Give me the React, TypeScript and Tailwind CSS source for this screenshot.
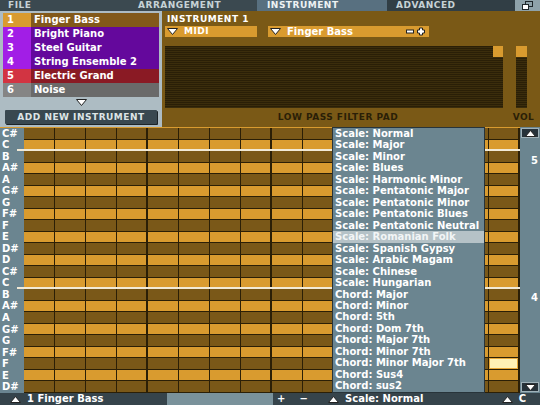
const notes = ["C#", "C", "B", "A#", "A", "G#", "G", "F#", "F", "E", "D#", "D", "C#", "C", "B", "A#", "A", "G#", "G", "F#", "F", "E", "D#"];

const scales = [
  "Scale: Normal",
  "Scale: Major",
  "Scale: Minor",
  "Scale: Blues",
  "Scale: Harmonic Minor",
  "Scale: Pentatonic Major",
  "Scale: Pentatonic Minor",
  "Scale: Pentatonic Blues",
  "Scale: Pentatonic Neutral",
  "Scale: Romanian Folk",
  "Scale: Spanish Gypsy",
  "Scale: Arabic Magam",
  "Scale: Chinese",
  "Scale: Hungarian",
  "Chord: Major",
  "Chord: Minor",
  "Chord: 5th",
  "Chord: Dom 7th",
  "Chord: Major 7th",
  "Chord: Minor 7th",
  "Chord: Minor Major 7th",
  "Chord: Sus4",
  "Chord: sus2",
];

const instruments = [
  { n: 1, name: "Finger Bass", num: "bg-[#d99b2f]", body: "bg-[#82591a]" },
  { n: 2, name: "Bright Piano", num: "bg-[#a21ee6]", body: "bg-[#64089c]" },
  { n: 3, name: "Steel Guitar", num: "bg-[#a21ee6]", body: "bg-[#64089c]" },
  { n: 4, name: "String Ensemble 2", num: "bg-[#a21ee6]", body: "bg-[#64089c]" },
  { n: 5, name: "Electric Grand", num: "bg-[#d23442]", body: "bg-[#8a1a24]" },
  { n: 6, name: "Noise", num: "bg-[#858585]", body: "bg-[#6a6a6a]" },
];

function Tri({ up = false, className = "" }: { up?: boolean; className?: string }) {
  return (
    <svg width="11" height="7" viewBox="0 0 11 7" className={className}>
      {up ? (
        <polygon points="0.5,6.5 5.5,0.5 10.5,6.5" fill="#fff" stroke="#222" strokeWidth="1" />
      ) : (
        <polygon points="0.5,0.5 10.5,0.5 5.5,6.5" fill="#fff" stroke="#222" strokeWidth="1" />
      )}
    </svg>
  );
}

function TopBar() {
  return (
    <div className="flex h-[11px] text-[9px] font-bold uppercase leading-none tracking-[0.5px] text-[#c6d2d6]">
      <div className="flex w-[128px] items-center bg-[#3b4950] pl-[8px]">File</div>
      <div className="flex w-[129px] items-center bg-[#3b4950] pl-[10px]">Arrangement</div>
      <div className="flex w-[130px] items-center bg-[#587080] pl-[10px] text-[#eef2f3]">Instrument</div>
      <div className="flex w-[128px] items-center bg-[#313e45] pl-[9px]">Advanced</div>
      <div className="flex flex-1 items-center justify-center bg-[#8ea2aa]">
        <svg width="11" height="9" viewBox="0 0 11 9">
          <rect x="3.5" y="0.5" width="7" height="5" fill="none" stroke="#1e262a" />
          <rect x="0.5" y="3.5" width="6" height="5" fill="#fff" stroke="#1e262a" />
        </svg>
      </div>
    </div>
  );
}

function InstrumentList() {
  return (
    <div className="flex w-[162px] flex-col bg-[#adbcc3] px-[3px] pt-[2px]">
      {instruments.map((it) => (
        <div key={it.n} className="flex h-[14px] text-[10px] font-bold leading-none text-white">
          <div className={`flex w-[28px] items-center pl-[4px] ${it.num}`}>{it.n}</div>
          <div className={`flex flex-1 items-center pl-[3px] ${it.body}`}>{it.name}</div>
        </div>
      ))}
      <div className="flex h-[11px] items-center justify-center">
        <Tri />
      </div>
      <div className="mx-[2px] mt-[2px] flex h-[14px] items-center justify-center rounded-[1px] bg-[#394850] text-[9px] font-bold uppercase leading-none tracking-[0.5px] text-[#dde4e6] shadow-[1px_1px_0_#1c2428]">
        Add New Instrument
      </div>
    </div>
  );
}

function InstrumentPanel() {
  return (
    <div className="flex flex-1 flex-col bg-[#7a5916] pl-[3px] pt-[3px]">
      <div className="pl-[2px] text-[9px] font-bold uppercase leading-[10px] tracking-[0.5px] text-white">Instrument 1</div>
      <div className="mt-[2px] flex h-[11px] text-[10px] font-bold leading-none text-white">
        <div className="flex w-[92px] items-center gap-[6px] bg-[#d99b2f] pl-[2px] text-[9px] uppercase tracking-[0.5px]">
          <Tri />
          Midi
        </div>
        <div className="ml-[11px] flex w-[161px] items-center gap-[6px] bg-[#d99b2f] pl-[2px]">
          <Tri />
          <span className="flex-1">Finger Bass</span>
          <svg width="22" height="9" viewBox="0 0 22 9" className="mr-[2px]">
            <rect x="1.5" y="3" width="7" height="3" fill="#fff" stroke="#222" strokeWidth="1" />
            <path d="M14.5 3H12.5V6H14.5V8H17.5V6H19.5V3H17.5V1H14.5Z" fill="#fff" stroke="#222" strokeWidth="1" />
          </svg>
        </div>
      </div>
      <div className="mt-[9px] flex h-[62px]">
        <div className="relative w-[338px] bg-[repeating-linear-gradient(to_bottom,#2a1f07_0px,#2a1f07_1px,#3b2d0c_1px,#3b2d0c_2px)]">
          <div className="absolute right-0 top-0 h-[11px] w-[10px] bg-[#d99b2f]" />
        </div>
        <div className="ml-[13px] flex w-[11px] flex-col bg-[repeating-linear-gradient(to_bottom,#2a1f07_0px,#2a1f07_1px,#3b2d0c_1px,#3b2d0c_2px)]">
          <div className="h-[11px] bg-[#d99b2f]" />
        </div>
      </div>
      <div className="mt-[4px] flex text-[9px] font-bold uppercase leading-[10px] tracking-[0.5px] text-[#2a1f07]">
        <div className="w-[346px] text-center">Low Pass Filter Pad</div>
        <div className="w-[25px] text-center">Vol</div>
      </div>
    </div>
  );
}

function NoteGrid() {
  return (
    <div className="relative flex h-[266px]">
      <div className="flex w-[520px] flex-col border-t border-[#d99b2f]">
        {notes.map((note, r) => {
          const light = r % 2 === 1;
          return (
            <div key={r} className="relative flex flex-1">
              <div className="flex w-[24px] items-center bg-[#6b8590] pl-[2px] text-[10px] font-bold leading-none text-white">
                {note}
              </div>
              {Array.from({ length: 16 }).map((_, c) => {
                const hot = r === 20 && c === 15;
                const thick = c % 4 === 3;
                return (
                  <div
                    key={c}
                    className={`w-[31px] border-b border-[#2b1f06] ${thick ? "border-r-2" : "border-r"} ${
                      hot ? "bg-[#fff1b6] shadow-[inset_0_0_0_1px_#e8a838]" : light ? "bg-[#d99b2f]" : "bg-[#7a5818]"
                    }`}
                  />
                );
              })}
              {note === "C" && <div className="absolute bottom-0 left-[17px] right-0 h-[2px] bg-[#f2ead6]" />}
            </div>
          );
        })}
      </div>
      <div className="flex w-[20px] flex-col bg-[#6b8590]">
        <div className="mx-[1px] mt-[1px] flex h-[10px] items-center justify-center border border-[#9fb1b8] bg-[#26323a]">
          <Tri up />
        </div>
        <div className="mt-[18px] pr-[2px] text-right text-[10px] font-bold leading-none text-white">5</div>
        <div className="mt-[127px] pr-[2px] text-right text-[10px] font-bold leading-none text-white">4</div>
        <div className="flex-1" />
        <div className="mx-[1px] mb-[1px] flex h-[10px] items-center justify-center border border-[#9fb1b8] bg-[#26323a]">
          <Tri />
        </div>
      </div>
      <div className="absolute bottom-0 left-[332px] top-0 flex w-[153px] flex-col border border-[#28343a] bg-[#6b8590]">
        {scales.map((s, i) => (
          <div
            key={s}
            className={`flex flex-1 items-center pl-[2px] text-[10px] font-bold leading-none ${
              i === 9 ? "bg-[#b5c2c7] text-[#f2f5f6]" : "text-white"
            }`}
          >
            {s}
          </div>
        ))}
      </div>
    </div>
  );
}

function BottomBar() {
  return (
    <div className="flex h-[12px] text-[10px] font-bold leading-none text-white">
      <div className="flex w-[167px] items-center gap-[6px] bg-[#36444b] pl-[10px]">
        <Tri up />
        <span>1 Finger Bass</span>
      </div>
      <div className="w-[106px] bg-[#7a929b]" />
      <div className="flex w-[49px] items-center gap-[14px] bg-[#36444b] pl-[4px]">
        <span>+</span>
        <span>−</span>
      </div>
      <div className="flex flex-1 items-center gap-[6px] bg-[#36444b] pl-[6px]">
        <Tri up />
        <span className="flex-1">Scale: Normal</span>
        <Tri up />
        <span className="mr-[14px]">C</span>
      </div>
    </div>
  );
}

export default function App() {
  return (
    <div className="flex h-[405px] w-[540px] flex-col overflow-hidden bg-[#36444b] font-['DejaVu_Sans',sans-serif]">
      <TopBar />
      <div className="flex h-[116px]">
        <InstrumentList />
        <InstrumentPanel />
      </div>
      <NoteGrid />
      <BottomBar />
    </div>
  );
}
